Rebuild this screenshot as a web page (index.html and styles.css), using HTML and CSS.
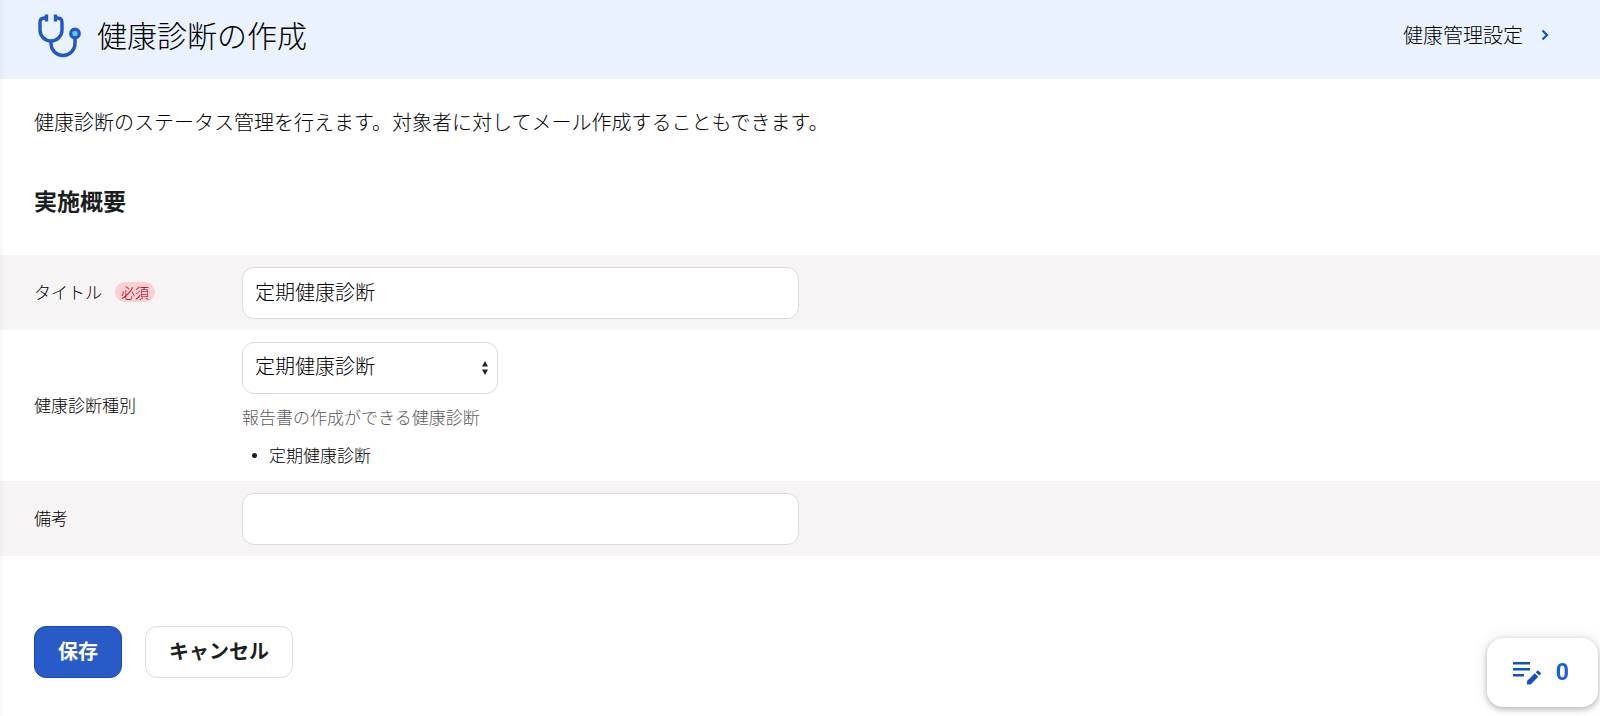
FILE: index.html
```html
<!DOCTYPE html>
<html lang="ja">
<head>
<meta charset="utf-8">
<meta name="viewport" content="width=device-width, initial-scale=1">
<title>健康診断の作成</title>
<link rel="stylesheet" href="styles.css">
</head>
<body>
<header class="page-header">
  <svg class="page-icon" viewBox="0 0 44 44" fill="none" aria-hidden="true">
    <g stroke="#2058c8" stroke-width="3.4">
      <path d="M9.500 4H7.500Q3 4 3 8.500V16a11 11 0 0 0 22 0V8.500Q25 4 20.500 4H18.500"/>
      <path d="M9.500 .5v7M18.500 .5v7"/>
      <path d="M14 27v2.500a12 12 0 0 0 12 12 12 12 0 0 0 12-12V25"/>
    </g>
    <circle cx="38" cy="19.500" r="4.300" fill="#5ac8d8" stroke="#2058c8" stroke-width="3.200"/>
  </svg>
  <h1 class="page-title">健康診断の作成</h1>
  <a class="settings-link" href="#">健康管理設定
    <svg class="chevron" viewBox="0 0 8 12" fill="none" aria-hidden="true"><path d="M1.500 1.500 6 6l-4.500 4.500" stroke="#1552c8" stroke-width="2.200"/></svg>
  </a>
</header>
<main>
  <p class="intro">健康診断のステータス管理を行えます。対象者に対してメール作成することもできます。</p>
  <h2 class="section-title">実施概要</h2>
  <form>
    <div class="row shaded">
      <div class="label-cell"><label for="title">タイトル</label><span class="required">必須</span></div>
      <div class="field"><input class="control" id="title" type="text" value="定期健康診断"></div>
    </div>
    <div class="row">
      <div class="label-cell"><label for="kind">健康診断種別</label></div>
      <div class="field">
        <div class="select-wrap">
          <select class="control" id="kind"><option>定期健康診断</option></select>
          <svg class="arrows" viewBox="0 0 6 14" aria-hidden="true"><path d="M3 0l3 5.500H0zM3 14l3-5.500H0z" fill="#222"/></svg>
        </div>
        <p class="help">報告書の作成ができる健康診断</p>
        <ul class="kinds"><li>定期健康診断</li></ul>
      </div>
    </div>
    <div class="row shaded">
      <div class="label-cell"><label for="note">備考</label></div>
      <div class="field"><input class="control" id="note" type="text"></div>
    </div>
    <div class="actions">
      <button class="btn primary" type="submit">保存</button>
      <button class="btn" type="button">キャンセル</button>
    </div>
  </form>
</main>
<button class="memo" type="button" aria-label="メモ 0">
  <svg class="memo-icon" viewBox="0 0 28 24" aria-hidden="true">
    <path d="M0 1h17v2.500H0zM0 7h17v2.500H0zM0 13h11v2.500H0z" fill="#1450c8"/>
    <path d="M14 20 21.800 12.200l3.500 3.500L17.500 23.500H14zM22.800 11.200l1.400-1.400q.7-.7 1.400 0l2 2q.7.700 0 1.400l-1.400 1.400z" fill="#1450c8"/>
  </svg>
  <span>0</span>
</button>
</body>
</html>
```
FILE: styles.css
```css
* { box-sizing: border-box; }

body {
  margin: 0;
  min-height: 100vh;
  background: #fff;
  box-shadow: inset 5px 0 5px -4px rgba(0, 0, 0, 0.06);
  color: #000;
  font-family: "Noto Sans CJK JP", sans-serif;
  font-weight: 300;
  font-size: 17px;
  line-height: 24px;
}

h1, h2, p, ul { margin: 0; }

input, select, button { font: inherit; color: inherit; }

.page-header {
  display: flex;
  align-items: center;
  padding: 14px 51px 21px 37px;
  background: #eaf2ff;
  box-shadow: inset 5px 0 5px -4px rgba(0, 0, 0, 0.06);
}

.page-icon { width: 44px; height: 44px; }

.page-title {
  flex: 1;
  margin-left: 16px;
  padding-bottom: 4px;
  font-size: 30px;
  font-weight: 300;
  line-height: 40px;
}

.settings-link {
  display: flex;
  align-items: center;
  gap: 18px;
  padding-bottom: 2px;
  color: inherit;
  font-size: 20px;
  text-decoration: none;
}

.chevron { width: 8px; height: 12px; }

.intro {
  padding: 28px 34px 0;
  font-size: 20px;
  line-height: 30px;
}

.section-title {
  padding: 48px 34px 40px;
  color: #1c1f21;
  font-size: 23px;
  font-weight: 700;
  line-height: 30px;
}

.row {
  display: grid;
  grid-template-columns: 208px 1fr;
  align-items: center;
  padding: 12px 34px 11px;
}

.shaded {
  background: #f6f4f5;
  box-shadow: inset 5px 0 5px -4px rgba(0, 0, 0, 0.06);
}

.label-cell {
  display: flex;
  align-items: center;
  gap: 13px;
  padding-bottom: 3px;
}

.required {
  padding: 0 6px;
  border-radius: 10px;
  background: #fbd0d5;
  color: #900018;
  font-size: 14px;
  line-height: 20px;
}

.control {
  display: block;
  width: 100%;
  max-width: 557px;
  height: 52px;
  padding: 0 12px 4px;
  border: 1px solid #dcdcdc;
  border-radius: 12px;
  background: #fff;
  font-size: 20px;
  appearance: none;
}

.select-wrap { position: relative; max-width: 256px; }

.arrows {
  position: absolute;
  top: 19px;
  right: 10px;
  width: 6px;
  height: 14px;
  pointer-events: none;
}

.help { margin-top: 11px; color: #5c595e; }

.kinds {
  margin-top: 14px;
  padding: 0 0 3px;
  list-style: none;
}

.kinds li {
  display: flex;
  align-items: center;
  gap: 12px;
  padding-left: 10px;
}

.kinds li::before {
  content: "";
  width: 5px;
  height: 5px;
  border-radius: 50%;
  background: #1c1f21;
}

.actions { display: flex; gap: 23px; padding: 70px 34px 38px; }

.btn {
  height: 52px;
  padding: 0 23px 3px;
  border: 1px solid #dcdcdc;
  border-radius: 12px;
  background: #fff;
  color: #1c1f21;
  font-size: 20px;
  font-weight: 700;
}

.primary { border-color: #1448c0; background: #285ac8; color: #fff; }

.memo {
  position: fixed;
  right: 2px;
  bottom: 9px;
  display: flex;
  align-items: center;
  gap: 15px;
  height: 69px;
  padding: 0 29px 0 26px;
  border: 0;
  border-radius: 16px;
  background: #fff;
  box-shadow: 0 2px 6px rgba(0, 0, 0, 0.28), 0 0 18px rgba(0, 0, 0, 0.08);
  color: #1a5cf0;
  font-family: Roboto, sans-serif;
  font-size: 23px;
  font-weight: 700;
}

.memo-icon { width: 28px; height: 24px; }
```
